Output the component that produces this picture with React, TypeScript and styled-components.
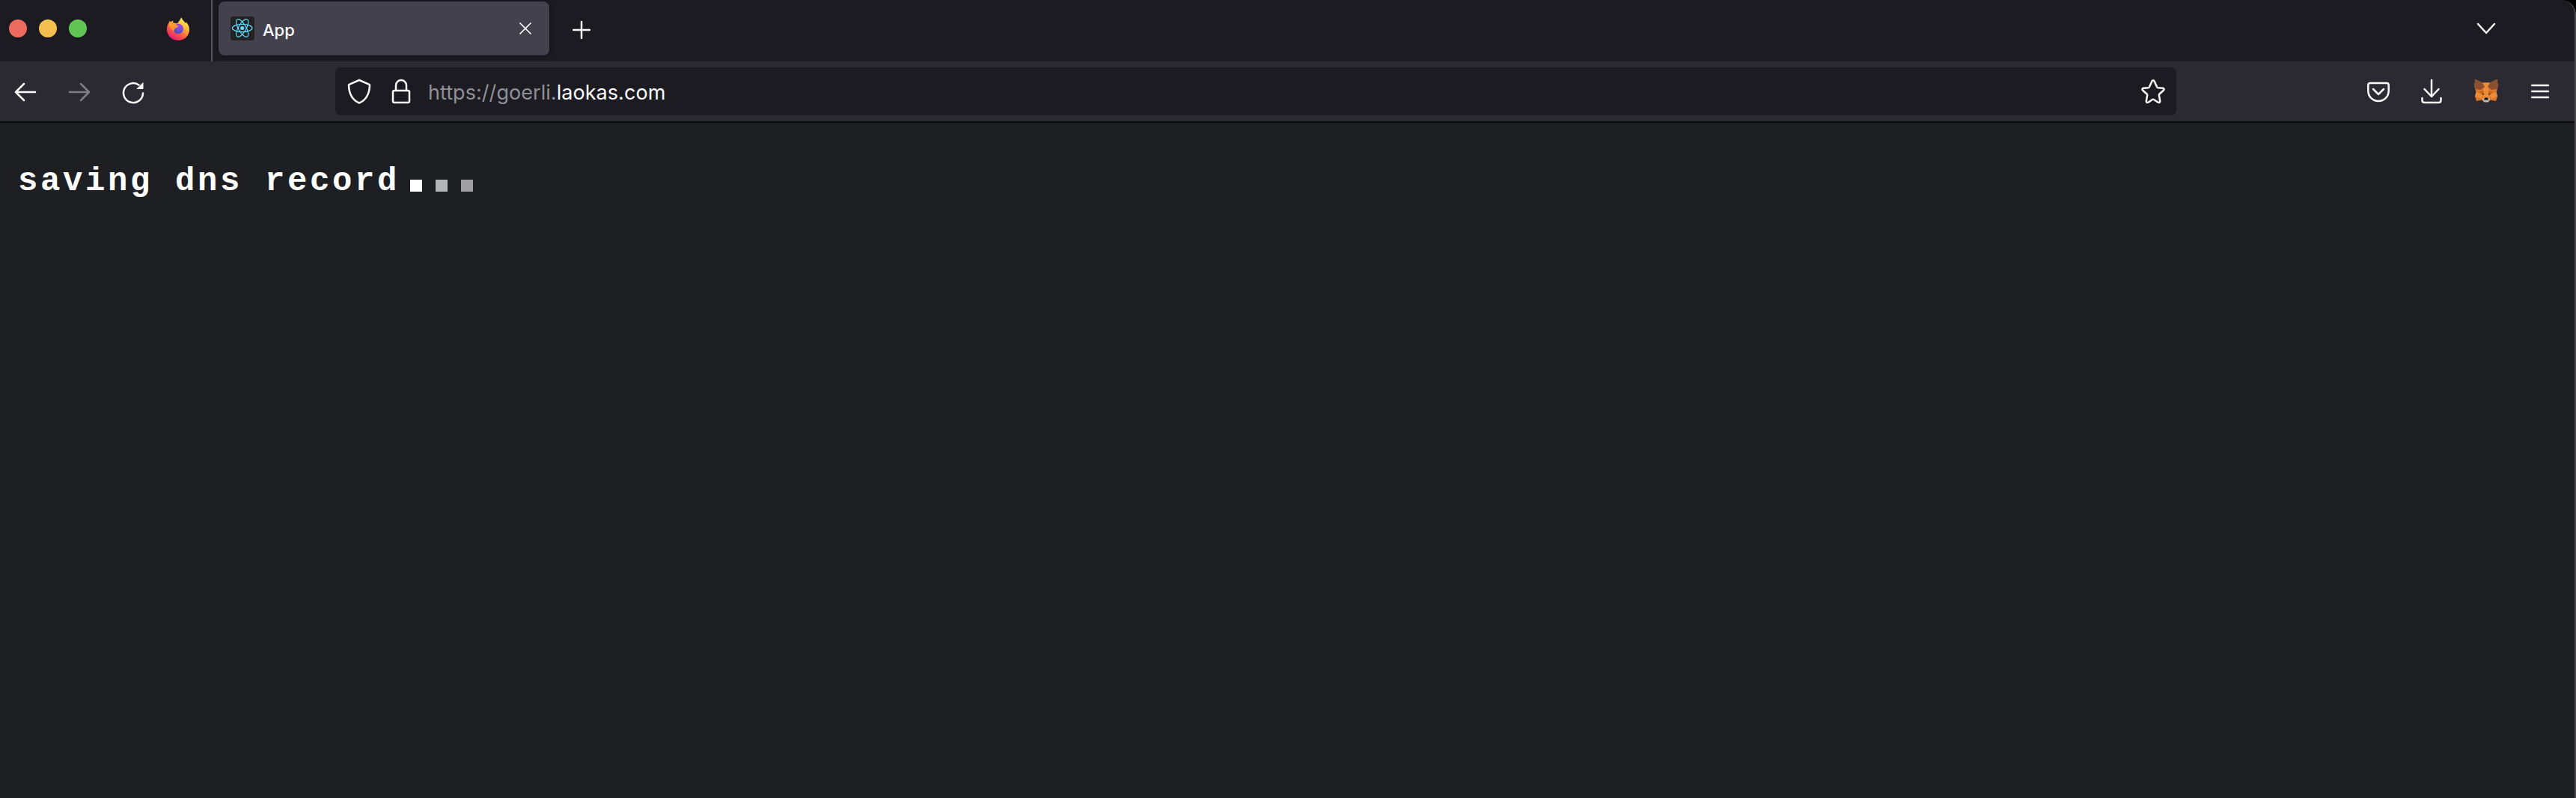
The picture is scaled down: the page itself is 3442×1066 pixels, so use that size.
import React from "react";
import styled, { createGlobalStyle } from "styled-components";

const Global = createGlobalStyle`
  *, *::before, *::after { box-sizing: border-box; }
  html, body { margin: 0; background: #000; }
  body { overflow: hidden; }
`;

const Window = styled.div`
  display: flex;
  flex-direction: column;
  width: 3442px;
  height: 1066px;
  background: #1e1f23;
  border-right: 2px solid #49494e;
  border-top-right-radius: 20px;
  overflow: hidden;
  font-family: Inter, "Liberation Sans", sans-serif;
  color: #fbfbfe;
`;

const TabStrip = styled.header`
  display: flex;
  align-items: center;
  height: 82px;
  flex: none;
  background: #1c1b22;
`;

const TrafficLights = styled.div`
  display: flex;
  gap: 16px;
  padding: 0 0 6px 12px;
  width: 222px;
`;

const Light = styled.span<{ $color: string }>`
  width: 24px;
  height: 24px;
  border-radius: 50%;
  background: ${(p) => p.$color};
`;

const PinnedTab = styled.div`
  display: flex;
  align-items: center;
  width: 62px;
  height: 82px;
  padding-bottom: 7px;
  border-right: 2px solid #55545c;
`;

const Tab = styled.div`
  display: flex;
  align-items: center;
  width: 442px;
  height: 72px;
  margin: 0 0 6px 8px;
  padding: 0 24px 0 16px;
  border-radius: 8px;
  background: #42414d;
  box-shadow: 0 0 6px rgba(0, 0, 0, 0.5);
`;

const TabTitle = styled.span`
  flex: 1;
  padding: 3px 0 0 11px;
  font-size: 22px;
  line-height: 28px;
  font-weight: 500;
`;

const IconSlot = styled.span<{ $ml?: number; $mt?: number; $dim?: boolean }>`
  display: flex;
  flex: none;
  margin-left: ${(p) => p.$ml ?? 0}px;
  margin-top: ${(p) => p.$mt ?? 0}px;
  opacity: ${(p) => (p.$dim ? 0.4 : 1)};
`;

const Spacer = styled.div`
  flex: 1;
`;

const Toolbar = styled.nav`
  display: flex;
  align-items: center;
  height: 82px;
  flex: none;
  padding-left: 18px;
  background: #2b2a33;
  border-bottom: 2px solid #0c0c0d;
`;

const UrlBar = styled.div`
  display: flex;
  align-items: center;
  width: 2460px;
  height: 64px;
  margin-left: 255px;
  padding: 0 15px 0 16px;
  border-radius: 8px;
  background: #1c1b22;
`;

const Url = styled.span`
  flex: 1;
  margin: 3px 0 0 23px;
  font-size: 27px;
  line-height: 34px;
  letter-spacing: 0.05px;
  color: #8f8f96;
  white-space: nowrap;
`;

const Host = styled.span`
  color: #fbfbfe;
`;

const Page = styled.main`
  flex: 1;
  padding: 46px 0 0 24px;
`;

const Status = styled.div`
  display: flex;
  height: 60px;
  color: #fff;
  font: bold 44px/60px "Liberation Mono", monospace;
  letter-spacing: 3.6px;
  white-space: pre;
`;

const StatusText = styled.span`
  padding-top: 2px;
`;

const Dots = styled.div`
  display: flex;
  gap: 18px;
  padding: 30px 0 0 14px;
`;

const Dot = styled.span<{ $color: string }>`
  width: 16px;
  height: 16px;
  background: ${(p) => p.$color};
`;

const Svg = styled.svg<{ $weight?: number }>`
  display: block;
  fill: none;
  stroke: #fbfbfe;
  stroke-width: ${(p) => p.$weight ?? 2.5};
  stroke-linecap: round;
  stroke-linejoin: round;
`;

const Firefox = () => (
  <svg width="32" height="32" viewBox="0 0 32 32">
    <defs>
      <linearGradient id="flame" x1="0.85" y1="0.1" x2="0.3" y2="1">
        <stop offset="0" stopColor="#fff14f" />
        <stop offset="0.35" stopColor="#ffb13a" />
        <stop offset="0.68" stopColor="#ff5545" />
        <stop offset="1" stopColor="#e01a77" />
      </linearGradient>
      <linearGradient id="orange" x1="0" y1="0" x2="1" y2="1">
        <stop offset="0" stopColor="#ffa52e" />
        <stop offset="1" stopColor="#ff8535" />
      </linearGradient>
      <radialGradient id="globe" cx="0.65" cy="0.2" r="0.8">
        <stop offset="0" stopColor="#a842e8" />
        <stop offset="0.6" stopColor="#6a50d8" />
        <stop offset="1" stopColor="#4a4db5" />
      </radialGradient>
    </defs>
    <path fill="url(#flame)" d="M20.5 1c.7 3.800 4 5.200 5.600 8.200.3-.7.300-1.600.2-2.300 3 3 4.700 6.900 4.700 10.500C31 25.600 24.400 32 16 32S1 25.500 1 17.200c0-3.600 1.100-6.700 2.900-9.100.1-1 .5-1.900 1.100-2.500.1.900.4 1.500.8 2 1.100-1 2.300-1.600 3.600-1.800-.3 1.200-.2 2 .2 2.900 1.400-.1 3.500.1 5.200.9 1.700-2.400 3.500-4.600 5.700-8.600z" />
    <circle cx="16.200" cy="16.500" r="6.800" fill="url(#globe)" />
    <path fill="url(#orange)" d="M3.900 9c1.500-1.500 3.500-2 5.700-.3 2.400 0 4.300.3 5.700 1.300l-2.200 1.100c1.300.8 2.300 1.200 3.600 1.300-.2 1.500-2.200 2.400-3.900 3-1.700.7-2.800 2.600-2.300 4.300-3.400-1.600-6-5-6.600-10.700z" />
  </svg>
);

const ReactLogo = () => (
  <svg width="32" height="32" viewBox="0 0 32 32">
    <rect width="32" height="32" rx="4" fill="#222" />
    <g transform="translate(15.700 15.500)" fill="none" stroke="#61dafb" strokeWidth="1.200">
      <circle r="2.600" fill="#61dafb" stroke="none" />
      <ellipse rx="13.300" ry="5.100" />
      <ellipse rx="13.300" ry="5.100" transform="rotate(60)" />
      <ellipse rx="13.300" ry="5.100" transform="rotate(120)" />
    </g>
  </svg>
);

const Fox = () => (
  <svg width="32" height="34" viewBox="0 0 32 34">
    <path fill="#d9772b" d="M1.500 1l9.500 4.500h10L30.500 1l1.500 9-2.500 8L31 23.500 29 30l-7-1.500-3 2.500h-6l-3-2.500L3 30 1 23.500 2.500 18 0 10z" />
    <path fill="#eb8c3b" d="M11 5.500h10L19.500 16h-7zM2.500 18L11 21l-1 6-9-3zM29.500 18L21 21l1 6 9-3zM12.500 16h7l1 10h-9z" />
    <path fill="#8b5030" d="M1.500 1L11 5.500l3 5.500-5 4-7.500-1L0 10zM30.500 1L21 5.500 18 11l5 4 7.500-1L32 10z" />
    <path fill="#cd6116" d="M7 17.500l6-1-1 6zM25 17.500l-6-1 1 6z" />
    <path fill="#4a3430" d="M9.500 19.500l4 1-1 1.500zM22.500 19.500l-4 1 1 1.500z" />
    <path fill="#c9b6a9" d="M10.500 27l3-1h5l3 1-3 4.500h-5z" />
    <path fill="#161616" d="M14 25.500h4l1 3h-6z" />
  </svg>
);

const App = () => (
  <>
    <Global />
    <Window>
      <TabStrip>
        <TrafficLights>
          <Light $color="#ed6a5e" />
          <Light $color="#f4bf4f" />
          <Light $color="#61c554" />
        </TrafficLights>
        <PinnedTab>
          <Firefox />
        </PinnedTab>
        <Tab>
          <ReactLogo />
          <TabTitle>App</TabTitle>
          <Svg width="16" height="16" viewBox="0 0 16 16" $weight={1.7}>
            <path d="M1 1l14 14M15 1L1 15" />
          </Svg>
        </Tab>
        <IconSlot $ml={31} $mt={-3}>
          <Svg width="24" height="24" viewBox="0 0 24 24">
            <path d="M12 1v22M1 12h22" />
          </Svg>
        </IconSlot>
        <Spacer />
        <IconSlot $mt={-6}>
          <Svg width="28" height="18" viewBox="0 0 28 18">
            <path d="M3 3l11 12L25 3" />
          </Svg>
        </IconSlot>
        <IconSlot $ml={104} />
      </TabStrip>
      <Toolbar>
        <IconSlot $ml={1} $mt={2}>
          <Svg width="30" height="26" viewBox="0 0 30 26">
            <path d="M28 13H2M13 2L2 13l11 11" />
          </Svg>
        </IconSlot>
        <IconSlot $ml={42} $mt={2} $dim>
          <Svg width="30" height="26" viewBox="0 0 30 26">
            <path d="M2 13h26M17 2l11 11-11 11" />
          </Svg>
        </IconSlot>
        <IconSlot $ml={42} $mt={4}>
          <Svg width="30" height="30" viewBox="0 0 30 30">
            <path d="M28 15.500A13 13 0 1 1 22.500 4.500" />
            <path d="M28 2v7.500h-7.500z" fill="#fbfbfe" strokeWidth="1" />
          </Svg>
        </IconSlot>
        <UrlBar>
          <IconSlot>
            <Svg width="32" height="34" viewBox="0 0 32 34">
              <path d="M16 2L2.500 7.800Q2 8 2 9C2.500 22 7.500 29 16 32.500 24.500 29 29.500 22 30 9q0-1-.5-1.200z" />
            </Svg>
          </IconSlot>
          <IconSlot $ml={27}>
            <Svg width="26" height="34" viewBox="0 0 26 34">
              <rect x="2" y="16" width="22" height="16" rx="2" />
              <path d="M6 16V9a7 7 0 0 1 14 0v7" />
            </Svg>
          </IconSlot>
          <Url>
            https://goerli.<Host>laokas.com</Host>
          </Url>
          <Svg width="32" height="34" viewBox="0 0 32 34">
            <path d="M14.400 3.500q1.600-2.500 3.200 0l3.400 7.500q.5 1 1.500 1.200l6.500.5q2.600.8.800 3l-5.300 4.800q-.8.800-.6 1.900l1.300 7.600q0 2.800-2.700 1.700L17 28q-1-.6-2 0l-5.500 3.700q-2.700 1.100-2.700-1.700l1.300-7.600q.2-1.100-.6-1.900L2.200 15.700q-1.800-2.200.8-3l6.500-.5q1-.2 1.500-1.200z" />
          </Svg>
        </UrlBar>
        <Spacer />
        <IconSlot $mt={2}>
          <Svg width="30" height="28" viewBox="0 0 30 28">
            <path d="M4 2h22q2.700 0 2.700 2.700V12C28.700 20.500 22.500 26 15 26S1.300 20.500 1.300 12V4.700Q1.300 2 4 2zM8 10l7 7 7-7" />
          </Svg>
        </IconSlot>
        <IconSlot $ml={42}>
          <Svg width="28" height="34" viewBox="0 0 28 34">
            <path d="M14 2v22M4.500 14l9.500 10 9.500-10M1.500 26v3q0 3 3 3h19q3 0 3-3v-3" />
          </Svg>
        </IconSlot>
        <IconSlot $ml={43}>
          <Fox />
        </IconSlot>
        <IconSlot $ml={44} $mt={-1}>
          <Svg width="24" height="22" viewBox="0 0 24 22">
            <path d="M1 3h22M1 11h22M1 19h22" />
          </Svg>
        </IconSlot>
        <IconSlot $ml={34} />
      </Toolbar>
      <Page>
        <Status>
          <StatusText>saving dns record</StatusText>
          <Dots>
            <Dot $color="#ffffff" />
            <Dot $color="#b4b5b7" />
            <Dot $color="#a0a0a2" />
          </Dots>
        </Status>
      </Page>
    </Window>
  </>
);

export default App;
